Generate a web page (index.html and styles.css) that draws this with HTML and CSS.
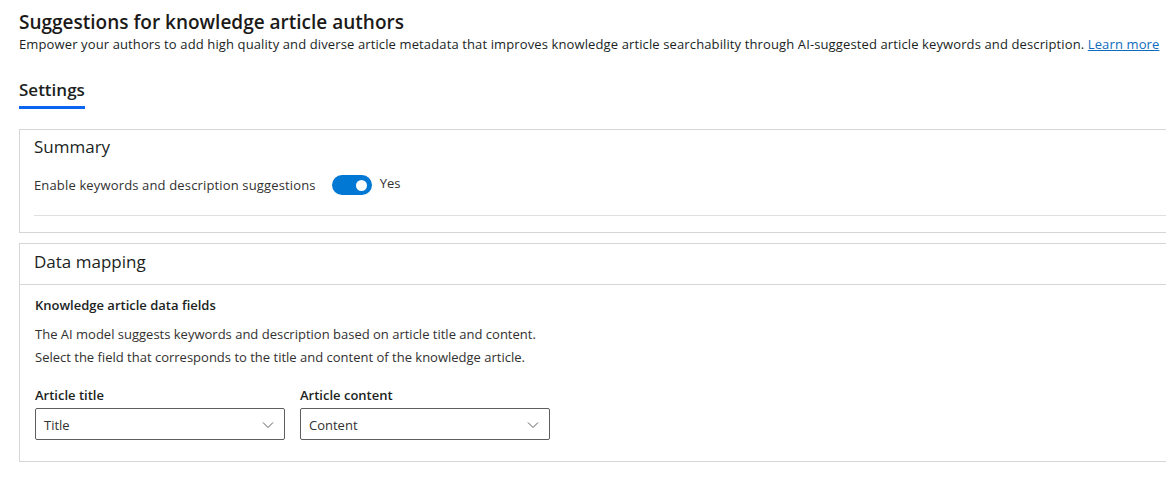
FILE: index.html
```html
<!DOCTYPE html>
<html lang="en">
<head>
    <meta charset="UTF-8">
    <title>Suggestions for knowledge article authors</title>
    <link rel="stylesheet" href="styles.css">
</head>
<body>
    <div class="page">
        <h1>Suggestions for knowledge article authors</h1>
        <p class="intro">Empower your authors to add high quality and diverse article metadata that improves knowledge article searchability through AI-suggested article keywords and description. <a href="#">Learn more</a></p>

        <div class="tabs">
            <span class="tab active">Settings</span>
        </div>

        <section class="card summary">
            <h2>Summary</h2>
            <div class="row">
                <span class="label">Enable keywords and description suggestions</span>
                <span class="toggle"><span class="knob"></span></span>
                <span class="toggle-text">Yes</span>
            </div>
            <div class="divider"></div>
        </section>

        <section class="card mapping">
            <div class="card-head">
                <h2>Data mapping</h2>
            </div>
            <div class="card-body">
                <h3>Knowledge article data fields</h3>
                <p>The AI model suggests keywords and description based on article title and content.</p>
                <p>Select the field that corresponds to the title and content of the knowledge article.</p>
                <div class="fields">
                    <div class="field">
                        <label>Article title</label>
                        <div class="select">
                            <span>Title</span>
                            <svg width="12" height="8" viewBox="0 0 12 8"><path d="M1 1.5 L6 6.5 L11 1.5" fill="none" stroke="#605e5c" stroke-width="1"/></svg>
                        </div>
                    </div>
                    <div class="field">
                        <label>Article content</label>
                        <div class="select">
                            <span>Content</span>
                            <svg width="12" height="8" viewBox="0 0 12 8"><path d="M1 1.5 L6 6.5 L11 1.5" fill="none" stroke="#605e5c" stroke-width="1"/></svg>
                        </div>
                    </div>
                </div>
            </div>
        </section>
    </div>
</body>
</html>
```

FILE: styles.css
```css
body {
    margin: 0;
    background: white;
    font-family: "Open Sans", "Noto Sans", Arial, sans-serif;
    color: #201f1e;
    overflow: hidden;
}

.page {
    padding: 9px 0 0 19px;
}

h1 {
    margin: 0;
    font-size: 19px;
    font-weight: 600;
    line-height: 26px;
    color: #1b1a19;
}

.intro {
    margin: 0;
    font-size: 13px;
    line-height: 18px;
    letter-spacing: 0.12px;
    white-space: nowrap;
}

.intro a {
    color: #0f6cbd;
    text-decoration: underline;
}

.tabs {
    margin-top: 22px;
    height: 36px;
}

.tab {
    display: inline-block;
    font-size: 17px;
    font-weight: 600;
    line-height: 30px;
    padding-bottom: 1px;
    border-bottom: 3px solid #0a66f0;
}

.card {
    border: 1px solid #d6d6d6;
    border-right: none;
    margin-bottom: 10px;
}

.card h2 {
    margin: 0;
    font-size: 17px;
    font-weight: 400;
    line-height: 24px;
    color: #201f1e;
}

.summary {
    margin-top: 18px;
    padding: 5px 0 15px 14px;
    height: 82px;
}

.summary .row {
    display: flex;
    align-items: center;
    margin-top: 15px;
    height: 22px;
}

.label {
    font-size: 13px;
    letter-spacing: 0.15px;
    color: #323130;
}

.toggle {
    display: inline-flex;
    align-items: center;
    justify-content: flex-end;
    box-sizing: border-box;
    width: 40px;
    height: 20px;
    margin-left: 16px;
    padding-right: 5px;
    border-radius: 10px;
    background: #0078d4;
}

.knob {
    width: 11px;
    height: 11px;
    border-radius: 50%;
    background: white;
}

.toggle-text {
    margin-left: 8px;
    font-size: 13px;
    color: #323130;
    position: relative;
    top: -2px;
}

.divider {
    margin-top: 19px;
    border-top: 1px solid #e1dfdd;
}

.card-head {
    padding: 0 0 5px 14px;
    display: flex;
    align-items: center;
    border-bottom: 1px solid #d6d6d6;
    box-sizing: border-box;
    height: 41px;
}

.card-body {
    padding: 10px 0 21px 15px;
}

.card-body h3 {
    margin: 0 0 9px;
    font-size: 13px;
    font-weight: 600;
    line-height: 20px;
    color: #201f1e;
}

.card-body p {
    margin: 0 0 3px;
    font-size: 13px;
    line-height: 20px;
    color: #323130;
}

.fields {
    display: flex;
    gap: 15px;
    margin-top: 18px;
}

.field label {
    display: block;
    font-size: 13px;
    font-weight: 600;
    line-height: 20px;
    margin-bottom: 3px;
}

.select {
    box-sizing: border-box;
    width: 250px;
    height: 32px;
    border: 1px solid #605e5c;
    border-radius: 2px;
    display: flex;
    align-items: center;
    justify-content: space-between;
    padding: 1px 10px 0 8px;
    font-size: 13px;
    color: #323130;
}
```
